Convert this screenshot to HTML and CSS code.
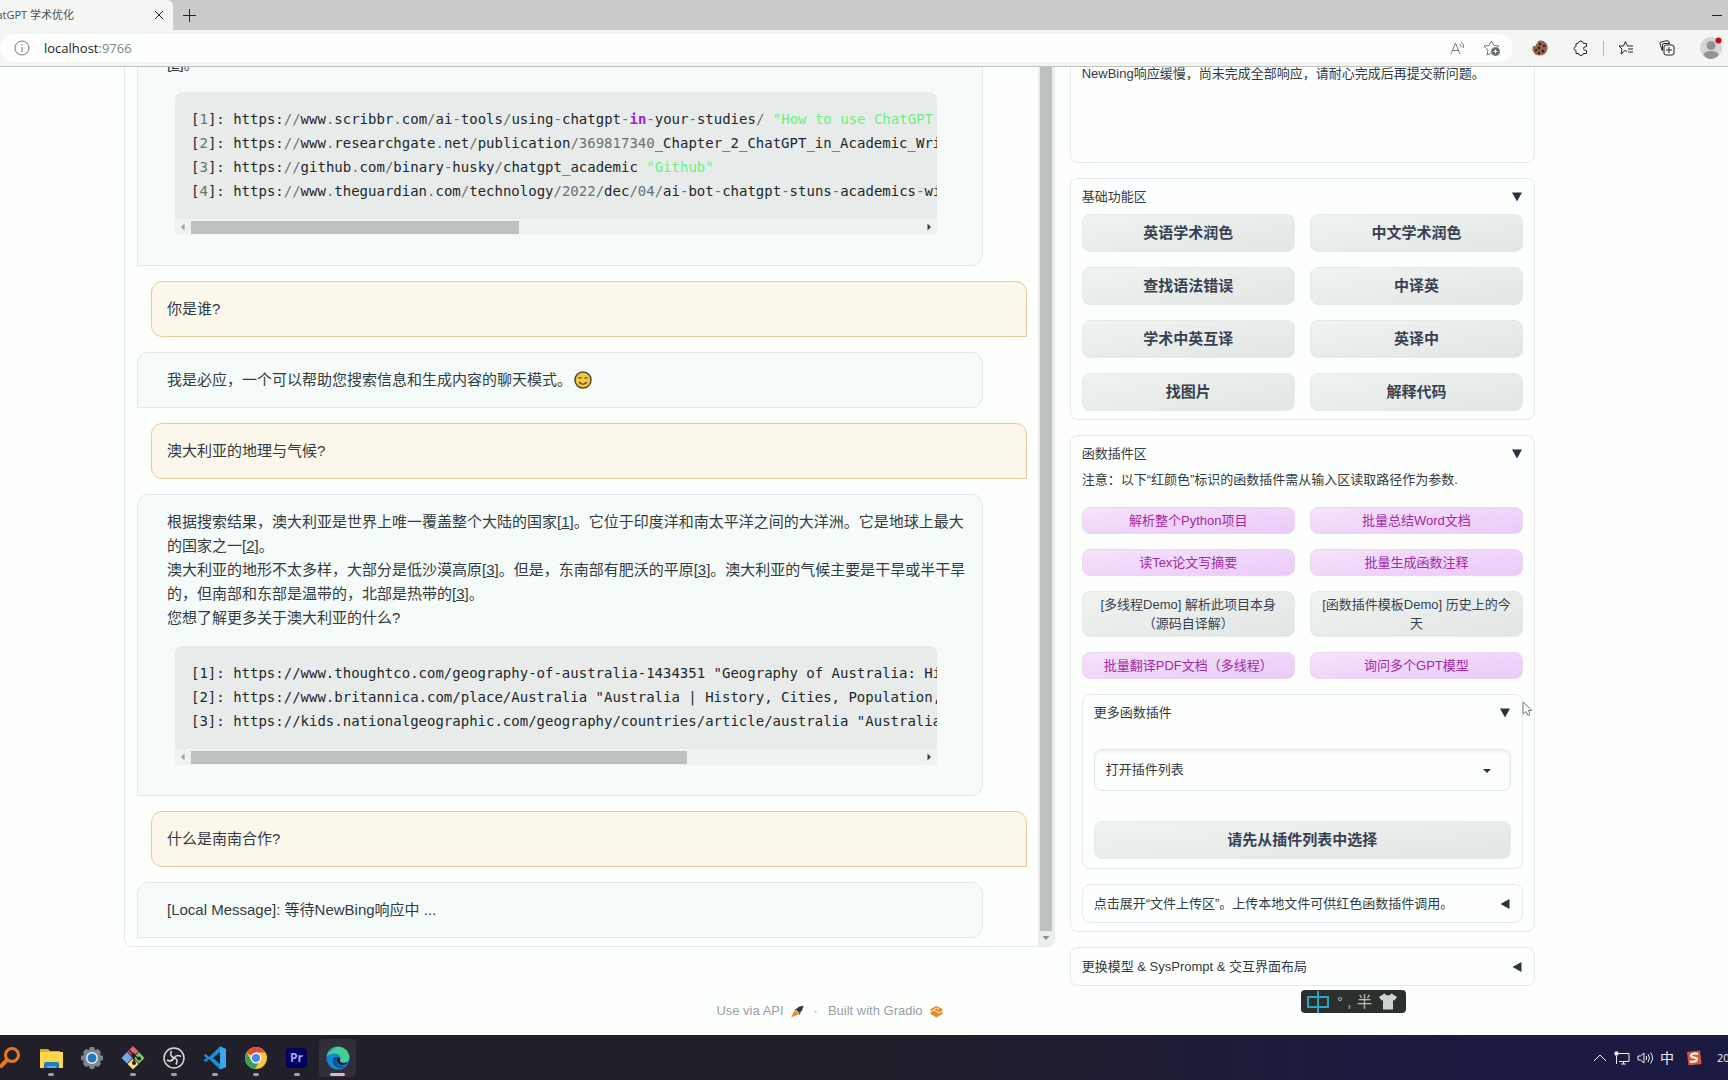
FILE: index.html
```html
<!DOCTYPE html>
<html lang="zh-CN">
<head>
<meta charset="utf-8">
<title>ChatGPT 学术优化</title>
<link rel="stylesheet" href="styles.css">
</head>
<body>
<header class="browser">
  <div class="tabstrip">
    <div class="tab">
      <span class="tab-title">ChatGPT 学术优化</span>
      <button class="icon-btn" aria-label="关闭"><svg width="8" height="8" viewBox="0 0 8 8" class="line dark"><path d="M0 0L8 8M8 0L0 8"/></svg></button>
    </div>
    <button class="icon-btn new-tab" aria-label="新标签页"><svg width="13" height="13" viewBox="0 0 13 13" class="line dark"><path d="M6.500 0V13M0 6.500H13"/></svg></button>
    <button class="icon-btn minimize" aria-label="最小化"><svg width="10" height="10" viewBox="0 0 10 10" class="line dark"><path d="M0 5.500H10"/></svg></button>
  </div>
  <div class="toolbar">
    <div class="address">
      <svg width="16" height="16" viewBox="0 0 16 16" class="line grey"><circle cx="8" cy="8" r="7"/><path d="M8 7V12M8 4V5.500"/></svg>
      <span class="url">localhost<span class="port">:9766</span></span>
      <svg width="16" height="16" viewBox="0 0 16 16" class="line grey"><path d="M1 14L5.500 3L10 14M2.500 10.500H8.500M9.500 4Q11.500 5 11 7.500M11 2Q14.500 4 13.500 8"/></svg>
      <svg width="18" height="18" viewBox="0 0 18 18" class="line grey"><path d="M8 14L4 16L5 11L1 7L6 6.500L8.500 2L11 6.500L16 7L14 9"/><circle cx="12.500" cy="12.500" r="4" class="fill-grey"/><path d="M12.500 10.500V14.500M10.500 12.500H14.500" stroke="#fff"/></svg>
    </div>
    <div class="tools">
      <svg width="16" height="16" viewBox="0 0 16 16"><path d="M8 .5Q11 0 13.500 2.500Q16 5 15.500 9Q14 15 8 15.500Q2 15.500 .5 10Q.3 8 1 6Q4 7 4 4Q6 4 5.500 1.500Z" fill="#94664f"/><g fill="#37231e"><circle cx="8" cy="4" r="1.300"/><circle cx="12" cy="6" r="1.300"/><circle cx="7" cy="8" r="1.400"/><circle cx="11" cy="11" r="1.500"/><circle cx="4" cy="10" r="1.200"/><circle cx="7" cy="13" r="1.200"/></g></svg>
      <svg width="16" height="16" viewBox="0 0 16 16" class="line dark"><path d="M5 3.500Q5.500 1 8 1Q10 1 10.500 3.500H13.500V6.500Q10.500 6.500 10.500 8.500Q10.500 10.500 13.500 10.500V13.500H10.500Q10 15.500 8 15.500Q6 15.500 5.500 13.500H3V10.500Q1 10 1 8.500Q1 7 3 6.500V3.500Z"/></svg>
    </div>
    <span class="separator"></span>
    <div class="tools">
      <svg width="16" height="16" viewBox="0 0 16 16" class="line dark"><path d="M9 11.500L7 10.500L3 14L4 9L1 6H5.500L7.500 1.500L9.500 6H15M10 9H15M10 12H15"/></svg>
      <svg width="16" height="16" viewBox="0 0 16 16" class="line dark"><path d="M3.500 11L1 4Q.5 2.500 2 2L8 .7Q9.500 .5 10 2V3"/><rect x="5" y="5" width="10" height="10" rx="2"/><path d="M10 7V13M7 10H13M3.500 10V5Q3.500 3.500 5 3.500H11"/></svg>
      <svg width="22" height="22" viewBox="0 0 22 22"><circle cx="11" cy="11" r="11" fill="#d6d7d5"/><circle cx="11" cy="8.500" r="4.500" fill="#949593"/><path d="M3.500 18Q4 14 11 14Q18 14 18.500 18Q15 22 11 22Q7 22 3.500 18Z" fill="#949593"/><circle cx="18.500" cy="3.500" r="3" fill="#c00d1c"/></svg>
    </div>
  </div>
</header>

<main class="viewport">
  <div class="page">
    <div class="columns">
      <section class="chat">
        <div class="messages">
          <article class="msg bot">
            <p>[<a href="#s2">2</a>]。</p>
            <div class="code">
<pre>[<i>1</i>]: https:<i>//</i>www<i>.</i>scribbr<i>.</i>com<i>/</i>ai<i>-</i>tools<i>/</i>using<i>-</i>chatgpt<i>-</i><b>in</b><i>-</i>your<i>-</i>studies<i>/</i> <q>"How to use ChatGPT in</q>
[<i>2</i>]: https:<i>//</i>www<i>.</i>researchgate<i>.</i>net<i>/</i>publication<i>/</i><i>369817340</i>_Chapter_2_ChatGPT_in_Academic_Writi
[<i>3</i>]: https:<i>//</i>github<i>.</i>com<i>/</i>binary<i>-</i>husky<i>/</i>chatgpt_academic <q>"Github"</q>
[<i>4</i>]: https:<i>//</i>www<i>.</i>theguardian<i>.</i>com<i>/</i>technology<i>/2022/</i>dec<i>/04/</i>ai<i>-</i>bot<i>-</i>chatgpt<i>-</i>stuns<i>-</i>academics<i>-</i>with</pre>
              <div class="hbar"><svg width="16" height="16" viewBox="0 0 16 16"><path d="M9.500 4.500V11.500L6 8Z" fill="#9ca09d"/></svg><div class="track"><div class="thumb" style="width:45%"></div></div><svg width="16" height="16" viewBox="0 0 16 16"><path d="M6.500 4.500V11.500L10 8Z" fill="#3c403e"/></svg></div>
            </div>
          </article>
          <article class="msg user"><p>你是谁?</p></article>
          <article class="msg bot"><p>我是必应，一个可以帮助您搜索信息和生成内容的聊天模式。<svg class="emoji" width="18" height="18" viewBox="0 0 18 18"><circle cx="9" cy="9" r="8" fill="#f3c846" stroke="#54472c" stroke-width="1.500"/><path d="M4.500 7.500Q6 5.500 7.500 7.500M10.500 7.500Q12 5.500 13.500 7.500M5 11Q9 15.500 13 11" fill="none" stroke="#54472c" stroke-width="1.200"/></svg></p></article>
          <article class="msg user"><p>澳大利亚的地理与气候?</p></article>
          <article class="msg bot">
            <p>根据搜索结果，澳大利亚是世界上唯一覆盖整个大陆的国家[<a href="#a1">1</a>]。它位于印度洋和南太平洋之间的大洋洲。它是地球上最大的国家之一[<a href="#a2">2</a>]。<br>澳大利亚的地形不太多样，大部分是低沙漠高原[<a href="#a3">3</a>]。但是，东南部有肥沃的平原[<a href="#a3">3</a>]。澳大利亚的气候主要是干旱或半干旱的，但南部和东部是温带的，北部是热带的[<a href="#a3">3</a>]。<br>您想了解更多关于澳大利亚的什么?</p>
            <div class="code">
<pre>[1]: https://www.thoughtco.com/geography-of-australia-1434351 "Geography of Australia: Hist
[2]: https://www.britannica.com/place/Australia "Australia | History, Cities, Population, C
[3]: https://kids.nationalgeographic.com/geography/countries/article/australia "Australia C</pre>
              <div class="hbar"><svg width="16" height="16" viewBox="0 0 16 16"><path d="M9.500 4.500V11.500L6 8Z" fill="#9ca09d"/></svg><div class="track"><div class="thumb" style="width:68%"></div></div><svg width="16" height="16" viewBox="0 0 16 16"><path d="M6.500 4.500V11.500L10 8Z" fill="#3c403e"/></svg></div>
            </div>
          </article>
          <article class="msg user"><p>什么是南南合作?</p></article>
          <article class="msg bot"><p>[Local Message]: 等待NewBing响应中 ...</p></article>
        </div>
        <div class="vbar"><div class="vthumb"></div><svg width="14" height="15" viewBox="0 0 14 15"><path d="M3.500 5H10.500L7 9Z" fill="#8a8e8b"/></svg></div>
      </section>

      <aside class="side">
        <div class="status">NewBing响应缓慢，尚未完成全部响应，请耐心完成后再提交新问题。</div>

        <details class="panel" open>
          <summary>基础功能区<svg width="10" height="10" viewBox="0 0 10 10"><path d="M0 .5H10L5 9.500Z"/></svg></summary>
          <div class="grid">
            <button class="btn">英语学术润色</button><button class="btn">中文学术润色</button>
            <button class="btn">查找语法错误</button><button class="btn">中译英</button>
            <button class="btn">学术中英互译</button><button class="btn">英译中</button>
            <button class="btn">找图片</button><button class="btn">解释代码</button>
          </div>
        </details>

        <details class="panel" open>
          <summary>函数插件区<svg width="10" height="10" viewBox="0 0 10 10"><path d="M0 .5H10L5 9.500Z"/></svg></summary>
          <p class="note">注意：以下“红颜色”标识的函数插件需从输入区读取路径作为参数.</p>
          <div class="grid">
            <button class="btn small pink">解析整个Python项目</button><button class="btn small pink">批量总结Word文档</button>
            <button class="btn small pink">读Tex论文写摘要</button><button class="btn small pink">批量生成函数注释</button>
            <button class="btn small">[多线程Demo] 解析此项目本身（源码自译解）</button><button class="btn small">[函数插件模板Demo] 历史上的今天</button>
            <button class="btn small pink">批量翻译PDF文档（多线程）</button><button class="btn small pink">询问多个GPT模型</button>
          </div>
          <details class="panel nested" open>
            <summary>更多函数插件<svg width="10" height="10" viewBox="0 0 10 10"><path d="M0 .5H10L5 9.500Z"/></svg></summary>
            <div class="select">
              <select aria-label="打开插件列表"><option>打开插件列表</option></select>
              <svg width="8" height="4" viewBox="0 0 8 4"><path d="M0 0H8L4 4Z"/></svg>
            </div>
            <button class="btn wide">请先从插件列表中选择</button>
          </details>
          <details class="panel nested">
            <summary>点击展开“文件上传区”。上传本地文件可供红色函数插件调用。<svg width="10" height="10" viewBox="0 0 10 10"><path d="M9.500 0V10L.5 5Z"/></svg></summary>
          </details>
        </details>

        <details class="panel">
          <summary>更换模型 &amp; SysPrompt &amp; 交互界面布局<svg width="10" height="10" viewBox="0 0 10 10"><path d="M9.500 0V10L.5 5Z"/></svg></summary>
        </details>
      </aside>
    </div>
    <footer class="footer">
      <a href="#api">Use via API <svg width="13" height="13" viewBox="0 0 13 13"><path d="M12.500 .5L7.500 2L5 5L8 8L11 5.500Z" fill="#30353c"/><path d="M3.500 5L6 2.800L5 5ZM8 10L10.500 7L8 8Z" fill="#30353c"/><path d="M4 5L8 9L5 10.500L0 12.500L2.200 8Z" fill="#ee8b2d"/></svg></a>
      <span>·</span>
      <a href="#gradio">Built with Gradio <svg width="13" height="13" viewBox="0 0 13 13"><path d="M6.500 1L12.500 4V9L6.500 12.500L.5 9V4Z" fill="#e88b2b"/><path d="M.5 6.500L4 5L9 8L12.500 6M4 4.500L6.500 3L9 4.500" fill="none" stroke="#fff1dc" stroke-width="1"/></svg></a>
    </footer>
  </div>
</main>

<footer class="taskbar">
  <nav class="apps">
    <button aria-label="搜索"><svg width="24" height="24" viewBox="0 0 24 24" fill="none" stroke="#e87722" stroke-width="3"><circle cx="14" cy="9" r="6.500"/><path d="M9.500 13.500L2 21" stroke-width="4"/></svg></button>
    <button class="running" aria-label="文件资源管理器"><svg width="24" height="24" viewBox="0 0 24 24"><path d="M1 3H9L11 5H21V9H1Z" fill="#e5a91d"/><path d="M1 6H24V22H1Z" fill="#fbd74d"/><path d="M5 22V18Q5 16 7 16H18Q20 16 20 18V22H17V20H8V22Z" fill="#237bc4"/><path d="M8 20H17V22H8Z" fill="#54a9de"/></svg></button>
    <button aria-label="设置"><svg width="24" height="24" viewBox="0 0 24 24"><path d="M10 1H14L15 4L18 3L21 6L20 9L23 10V14L20 15L21 18L18 21L15 20L14 23H10L9 20L6 21L3 18L4 15L1 14V10L4 9L3 6L6 3L9 4Z" fill="#7a858d"/><circle cx="12" cy="12" r="6" fill="#e8f0f5"/><circle cx="12" cy="12" r="4.500" fill="#2779bf"/></svg></button>
    <button class="running" aria-label="Git"><svg width="24" height="24" viewBox="0 0 24 24"><path d="M12 0L17.500 5.500L12 11L6.500 5.500Z" fill="#e8636a"/><path d="M6 6L11.500 12L6 17.500L.5 12Z" fill="#76a9ea"/><path d="M18 6L23.500 12L18 17.500L12.500 12Z" fill="#7bc96c"/><path d="M12 12.500L17.500 18L12 23.500L6.500 18Z" fill="#f6e27d"/><path d="M8 4L13 9V18M13 9L18 13" fill="none" stroke="#222" stroke-width="1.500"/><g fill="#222"><circle cx="12.500" cy="9" r="2"/><circle cx="13" cy="17" r="2"/><circle cx="18" cy="12.500" r="2"/></g></svg></button>
    <button class="running" aria-label="OBS"><svg width="24" height="24" viewBox="0 0 24 24"><circle cx="12" cy="12" r="10" fill="#222126" stroke="#dad9dc" stroke-width="1.500"/><path d="M9.500 5Q7 9.500 12 12Q14.500 8 19 10.500M12 12Q9.500 16.500 5 14M12 12Q17 13 14 18.500" fill="none" stroke="#dad9dc" stroke-width="1.600"/></svg></button>
    <button class="running" aria-label="VS Code"><svg width="24" height="24" viewBox="0 0 24 24"><path d="M17 .5L23 3V21L17 23.500L6 13L3 16L.5 14.500L3.500 12L.5 9.500L3 8L6 11Z" fill="#1690d6"/><path d="M17 6V18L10 12Z" fill="#201f29"/><path d="M17 .5L23 3V21L17 23.500Z" fill="#3aa8ee"/></svg></button>
    <button class="running" aria-label="Chrome"><svg width="24" height="24" viewBox="0 0 24 24"><circle cx="12" cy="12" r="11" fill="#f4c83b"/><path d="M12 12L2.500 6.500A11 11 0 0 1 21.500 6.500H12Z" fill="#df4d3e"/><path d="M2.500 6.500A11 11 0 0 0 11 23L15.500 15L7 14Z" fill="#35a056"/><circle cx="12" cy="12" r="5.500" fill="#f8f8f6"/><circle cx="12" cy="12" r="4" fill="#4388ec"/></svg></button>
    <button class="running" aria-label="Premiere Pro"><span class="premiere">Pr</span></button>
    <button class="running active" aria-label="Edge"><svg width="24" height="24" viewBox="0 0 24 24"><circle cx="12" cy="12" r="11.500" fill="#1685cf"/><path d="M1 9A11.500 11.500 0 0 1 23.500 11Q23 17 17 16.500Q13 16 14.500 13Q15 8 9 7.500Q4 7 1 11Z" fill="#45cf91"/><path d="M1 10Q3 2 11 .5Q5 4 1 10Z" fill="#2ba9d8"/><path d="M8 11Q5 16 9 20Q14 24 20 20Q13 21 11 17Q9 14 11 11Z" fill="#104f92"/><path d="M11 11Q15 11 14 14Q13 16.500 17 17Q21 17.500 22.500 15Q20 20 15 19Q9 17 11 11Z" fill="#211f29"/></svg></button>
  </nav>
  <div class="tray">
    <svg width="14" height="14" viewBox="0 0 14 14" class="line light"><path d="M1 10L7 4L13 10"/></svg>
    <svg width="16" height="14" viewBox="0 0 16 14" class="line light"><path d="M5 2.500H15V10.500H5M7 13H12M9.500 10.500V13M2.500 5V13"/><path d="M1 1H4V4H1Z" fill="#fff"/></svg>
    <svg width="16" height="14" viewBox="0 0 16 14" class="line light"><path d="M1 5H3.500L7 2V12L3.500 9H1ZM9 5Q10.500 7 9 9M11 3Q14 7 11 11M13.500 1.500Q17.500 7 13.500 12.500"/></svg>
    <span>中</span>
    <svg width="16" height="16" viewBox="0 0 16 16"><path d="M1 2L14 .5L15.500 14L2.500 15.500Z" fill="#d4573a"/><path d="M12 4Q8 3 5.500 4.500Q4 7 8 7.500Q12 8 10.500 10.500Q8 12.500 4 11.500" fill="none" stroke="#fff" stroke-width="2"/></svg>
    <time>20</time>
  </div>
</footer>

<div class="ime">
  <svg width="24" height="22" viewBox="0 0 24 22" fill="none" stroke="#2fa3c4" stroke-width="2"><path d="M2 6H22V16H2Z"/><path d="M12 0V22"/></svg>
  <span>° ,</span><span>半</span>
  <svg width="18" height="17" viewBox="0 0 18 17"><path d="M5.500 .5Q9 4.500 12.500 .5L18 4L15.500 7.500L14 7V16.500H4V7L2.500 7.500L0 4Z" fill="#cfd3cf"/></svg>
</div>
<svg class="cursor" width="11" height="16" viewBox="0 0 11 16"><path d="M1 1V13L4 10.500L6 14.500L8 13.500L6.500 9.500H10Z" fill="#fff" stroke="#777b79"/></svg>
</body>
</html>
```
FILE: styles.css
```css
* { box-sizing: border-box; }
html, body { height: 100%; }
body {
  margin: 0;
  display: flex;
  flex-direction: column;
  overflow: hidden;
  background: #fdfffd;
  color: #333b42;
  font: 13px/20px "Liberation Sans", "Noto Sans CJK SC", sans-serif;
}
p { margin: 0; }
button, select { font: inherit; color: inherit; }
svg { display: block; flex: none; }
.line { fill: none; stroke-width: 1; }
.dark { stroke: #222524; }
.grey { stroke: #777b79; }
.light { stroke: #f0f0f5; }
.fill-grey { fill: #666a68; }

/* Browser frame */
.browser { flex: none; font-family: "Open Sans", "Noto Sans CJK SC", sans-serif; }
.tabstrip { display: flex; height: 30px; background: #caccca; }
.tab {
  display: flex;
  align-items: center;
  justify-content: space-between;
  width: 173px;
  padding-right: 9px;
  background: #f4f6f4;
  border-top-right-radius: 6px;
}
.tab-title {
  display: flex;
  justify-content: flex-end;
  width: 74px;
  overflow: hidden;
  white-space: nowrap;
  font-size: 11px;
  color: #4c504e;
}
.icon-btn { display: flex; align-items: center; padding: 0; border: 0; background: none; }
.tab .icon-btn { padding: 1px; }
.new-tab { margin-left: 10px; }
.minimize { margin-left: auto; margin-right: 6px; }
.toolbar {
  display: flex;
  align-items: center;
  gap: 14px;
  height: 37px;
  padding-right: 6px;
  background: #f4f6f4;
  border-bottom: 1px solid #bfc3c0;
}
.address {
  display: flex;
  flex: 1;
  align-items: center;
  gap: 14px;
  height: 28px;
  padding: 0 12px 0 14px;
  background: #fdfffd;
  border-radius: 14px;
}
.url { flex: 1; font-size: 13px; color: #1f2321; }
.port { color: #7f8381; }
.address svg:last-child { margin-left: 3px; }
.tools { display: flex; align-items: center; gap: 25px; }
.tools:nth-child(2) { padding-left: 5px; }
.separator { width: 1px; height: 15px; background: #b4b8b5; }

/* Scrolled page */
.viewport { flex: 1; min-height: 0; overflow: hidden; }
.page { margin-top: -48px; padding: 0 193px 0 124px; }
.columns {
  display: grid;
  grid-template-columns: minmax(0, 2fr) minmax(0, 1fr);
  gap: 15px;
  align-items: start;
}

/* Conversation */
.chat {
  display: flex;
  overflow: hidden;
  border: 1px solid #e6eae8;
  border-radius: 8px;
}
.messages {
  display: flex;
  flex: 1;
  flex-direction: column;
  gap: 15px;
  min-width: 0;
  padding: 16px 11px 8px 12px;
}
.msg {
  padding: 15px;
  border: 1px solid;
  border-radius: 11px;
  font-size: 15px;
  line-height: 24px;
}
.bot {
  margin-right: 44px;
  padding-left: 29px;
  border-color: #e0e9e5;
  border-bottom-left-radius: 0;
  background: #f5fbf8;
}
.user {
  margin-left: 14px;
  border-color: #e9cb9b;
  border-bottom-right-radius: 0;
  background: #fbf7ea;
}
.msg a { color: inherit; text-decoration: underline; }
.emoji { display: inline-block; margin-left: 2px; vertical-align: -4px; }
.code {
  margin: 16px 30px 15px 8px;
  overflow: hidden;
  border-radius: 8px 8px 0 0;
  background: #e7ecea;
}
.code pre {
  margin: 0;
  padding: 15px 0 16px 16px;
  overflow: hidden;
  font: 14px/24px "DejaVu Sans Mono", monospace;
  color: #22272c;
}
.code i { font-style: normal; color: #6b716f; }
.code b { color: #9526dc; }
.code q { quotes: none; color: #6af083; }
.hbar { display: flex; align-items: center; height: 16px; background: #eff2f0; }
.track { flex: 1; }
.thumb { height: 13px; background: #bcc1bd; }
.vbar {
  display: flex;
  flex-direction: column;
  align-items: center;
  width: 16px;
  background: #eceeec;
}
.vthumb { flex: 1; width: 12px; background: #bcc1bd; }

/* Side column */
.side { display: flex; flex-direction: column; gap: 15px; }
.status, .panel { border: 1px solid #e6eae8; border-radius: 8px; }
.status { min-height: 144px; padding: 44px 11px 12px; white-space: nowrap; }
.panel { padding: 9px 11px 8px; }
.panel[open] { padding: 8px 11px; }
.nested[open] { padding-bottom: 9px; }
summary {
  display: flex;
  align-items: center;
  justify-content: space-between;
  list-style: none;
  padding-right: 1px;
}
summary svg, .select svg { fill: #2b343d; }
.note { margin: 5px 0 16px; line-height: 22px; white-space: nowrap; }
.grid { display: grid; grid-template-columns: 1fr 1fr; gap: 15px; }
summary + .grid { margin-top: 7px; }
.nested { margin-top: 15px; }
.btn {
  padding: 8px;
  border: 1px solid #e4eae7;
  border-radius: 8px;
  background: linear-gradient(to bottom right, #eff4f1, #e1e6e5);
  color: #374151;
  font-size: 15px;
  font-weight: 700;
  line-height: 20px;
}
.small { padding: 3px 8px; font-size: 13px; font-weight: 400; line-height: 19px; }
.pink {
  border-color: #ead7ef;
  background: linear-gradient(to bottom right, #f5e3fa, #ebc9f8);
  color: #a128a6;
}
.wide { width: 100%; }
.select { position: relative; margin: 26px 0 30px; }
.select select {
  display: block;
  width: 100%;
  height: 42px;
  padding: 0 11px;
  appearance: none;
  border: 1px solid #e3e7e5;
  border-radius: 8px;
  background: #fdfffd;
  box-shadow: inset 0 2px 3px #eef1ef;
}
.select svg { position: absolute; right: 20px; top: 20px; }

/* Page footer */
.footer {
  display: flex;
  justify-content: center;
  gap: 10px;
  margin-top: 15px;
  color: #9a9fa3;
}
.footer a { display: flex; align-items: center; gap: 7px; color: inherit; text-decoration: none; }

/* Taskbar */
.taskbar {
  display: flex;
  flex: none;
  align-items: center;
  justify-content: space-between;
  height: 45px;
  overflow: hidden;
  background: linear-gradient(to right, #211f29 0 50%, #1a1a42 85%);
  color: #eeeef4;
}
.apps { display: flex; gap: 4px; margin-left: -9px; }
.apps button {
  position: relative;
  display: flex;
  align-items: center;
  justify-content: center;
  width: 37px;
  height: 38px;
  padding: 0;
  border: 0;
  border-radius: 4px;
  background: none;
}
.apps .active { background: #302e38; }
.running::after {
  content: "";
  position: absolute;
  bottom: 1px;
  width: 6px;
  height: 3px;
  border-radius: 2px;
  background: #a3a1a8;
}
.active::after { width: 15px; background: #dcb7be; }
.premiere {
  width: 21px;
  border-radius: 4px;
  background: #00005c;
  color: #a9a0fb;
  font: 700 12px/20px "Open Sans", sans-serif;
}
.tray { display: flex; align-items: center; gap: 7px; font-size: 14px; }
.tray span { margin-right: 5px; }
.tray time {
  align-self: flex-end;
  width: 11px;
  margin-left: 8px;
  overflow: hidden;
  font: 11px/20px "Open Sans", sans-serif;
}

/* Overlays */
.ime {
  position: absolute;
  left: 1301px;
  top: 990px;
  display: flex;
  align-items: center;
  gap: 7px;
  width: 105px;
  height: 23px;
  padding-left: 5px;
  border-radius: 4px;
  background: #2c302d;
  color: #b9bdb9;
  font-size: 15px;
}
.ime span { white-space: nowrap; }
.ime span:first-of-type { width: 13px; }
.cursor { position: absolute; left: 1522px; top: 701px; }
```
